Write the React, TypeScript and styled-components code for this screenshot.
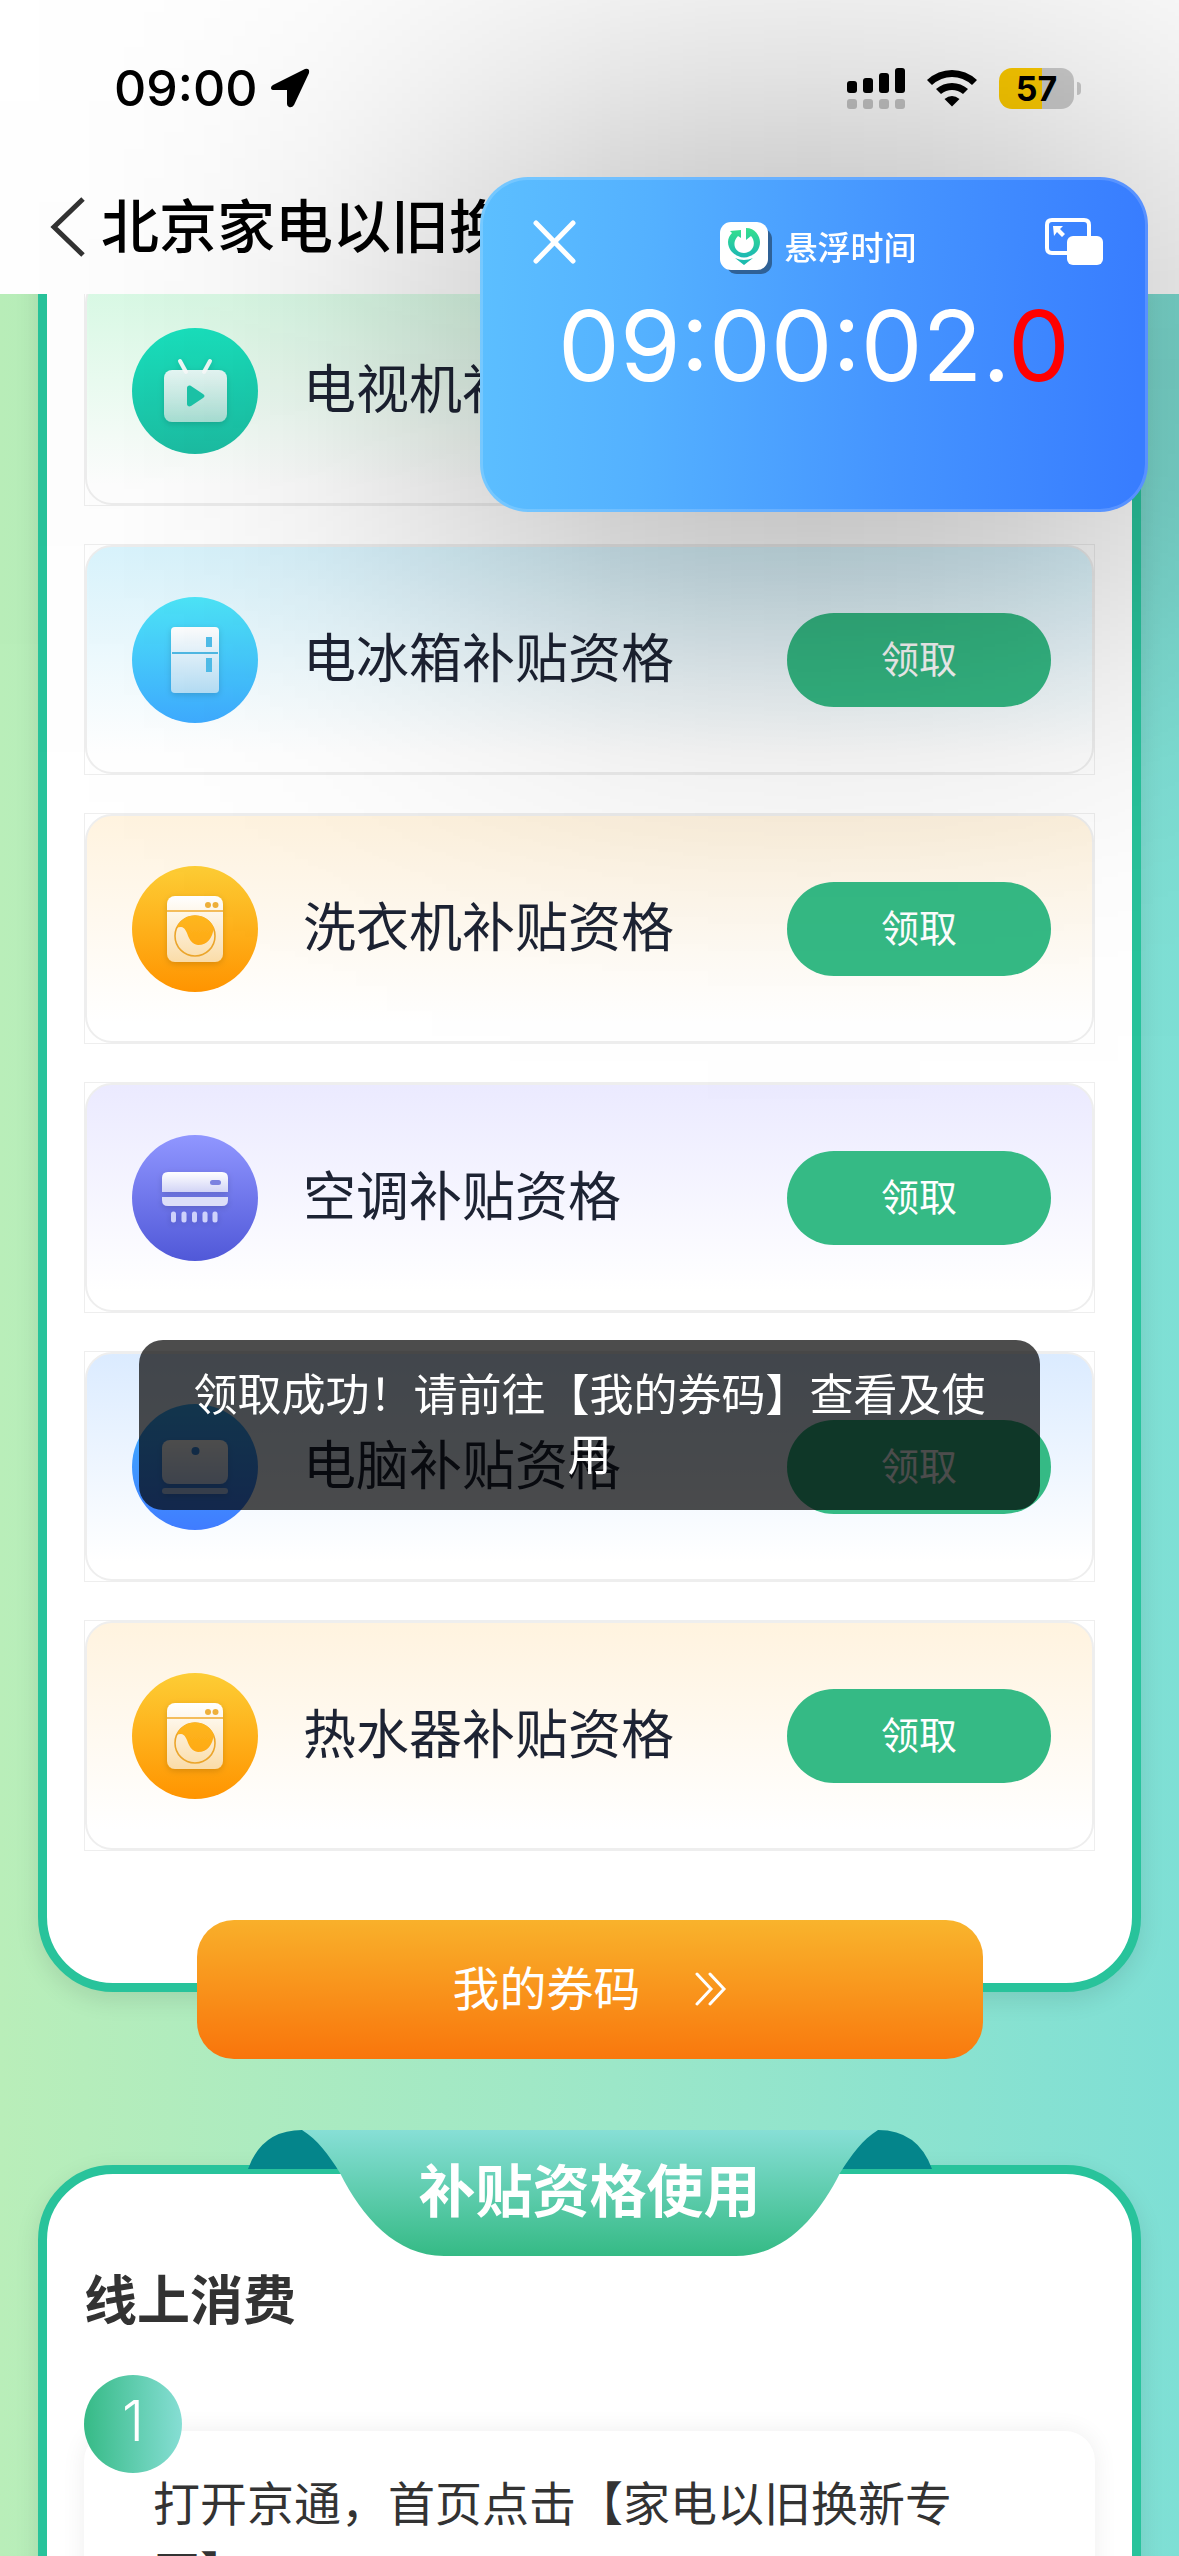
import React from "react";
import styled, { createGlobalStyle } from "styled-components";

const GlobalStyle = createGlobalStyle`
  *, *::before, *::after { box-sizing: border-box; }
  body {
    margin: 0;
    font-family: Inter, "Noto Sans CJK SC", sans-serif;
    color: #333;
  }
  h1, h2, h3, p, ul, ol { margin: 0; padding: 0; }
  ul, ol { list-style: none; }
  button { border: 0; padding: 0; background: none; color: inherit; font-family: inherit; cursor: pointer; }
  svg { display: block; flex: none; }
`;

const Screen = styled.div`
  display: flex;
  flex-direction: column;
  height: 100vh;
  overflow: hidden;
  background: linear-gradient(90deg, #b9eeb9 0%, #9ce7c8 52%, #7edfd5 100%);
`;

const Header = styled.header`
  flex: none;
  background: #fff;
  color: #000;
`;

const StatusBar = styled.div`
  display: flex;
  align-items: center;
  justify-content: space-between;
  height: 160px;
  padding: 16px 98px 0 114px;
`;

const StatusGroup = styled.div<{ $gap: number }>`
  display: flex;
  align-items: center;
  gap: ${(p) => p.$gap}px;
`;

const Clock = styled.time`
  font-size: 50px;
  line-height: 60px;
  font-weight: 500;
`;

const Battery = styled.div`
  display: flex;
  align-items: center;
  gap: 3px;
`;

const BatteryBody = styled.div`
  width: 75px;
  height: 41px;
  border-radius: 13px;
  background: linear-gradient(90deg, #ffcd00 57%, #cdcdcd 57%);
  font-size: 34px;
  line-height: 41px;
  font-weight: 700;
  text-align: center;
`;

const BatteryTip = styled.span`
  width: 4px;
  height: 13px;
  border-radius: 0 4px 4px 0;
  background: #cdcdcd;
`;

const NavBar = styled.div`
  display: flex;
  align-items: center;
  gap: 15px;
  height: 134px;
  padding: 0 48px;
`;

const BackButton = styled.button`
  width: 38px;
  height: 60px;
`;

const Title = styled.h1`
  overflow: hidden;
  white-space: nowrap;
  font-size: 58px;
  line-height: 80px;
  font-weight: 500;
`;

const Content = styled.main`
  flex: 1;
  min-height: 0;
  padding: 0 38px;
  overflow-y: auto;
  scrollbar-width: none;
`;

const Card = styled.section`
  border: 9px solid #28c39b;
  border-radius: 75px;
  background: #fff;
  box-shadow: 0 8px 24px rgba(0, 0, 0, 0.1);
`;

const ClaimCard = styled(Card)`
  margin-top: -120px;
  padding: 92px 37px 132px;
`;

const ClaimList = styled.ul`
  display: flex;
  flex-direction: column;
  gap: 38px;
`;

const ClaimItem = styled.li`
  height: 231px;
  border: 1px solid #eee;
`;

const ClaimPanel = styled.div<{ $tint: string }>`
  display: flex;
  align-items: center;
  height: 100%;
  padding: 0 41px 0 45px;
  border: 2px solid #eee;
  border-radius: 27px;
  background: linear-gradient(180deg, ${(p) => p.$tint} 0%, #fff 92%);
`;

const ClaimName = styled.span`
  flex: 1;
  padding: 0 0 2px 45px;
  font-size: 53px;
  line-height: 76px;
  color: #1d2333;
`;

const ClaimButton = styled.button`
  width: 264px;
  height: 94px;
  padding-bottom: 2px;
  border-radius: 47px;
  background: #35ba85;
  color: #fff;
  font-size: 38px;
  line-height: 56px;
`;

const VoucherButton = styled.button`
  position: relative;
  display: flex;
  align-items: center;
  justify-content: center;
  gap: 54px;
  width: calc(100% - 317px);
  height: 139px;
  margin: -72px auto 71px;
  padding-bottom: 2px;
  border-radius: 37px;
  background: linear-gradient(181deg, #f9b52d 0%, #f9740b 100%);
  color: #fff;
  font-size: 47px;
  line-height: 70px;
`;

const Ribbon = styled.h2`
  position: relative;
  z-index: 1;
  width: 684px;
  height: 126px;
  margin: 0 auto -91px;
  color: #fff;
  font-size: 57px;
  line-height: 124px;
  font-weight: 700;
  text-align: center;
`;

const RibbonShape = styled.svg`
  position: absolute;
  inset: 0;
  z-index: -1;
`;

const UsageCard = styled(Card)`
  padding: 97px 37px 80px;
`;

const UsageHeading = styled.h3`
  margin-bottom: 44px;
  font-size: 53px;
  line-height: 60px;
  font-weight: 700;
`;

const StepNumber = styled.span`
  position: relative;
  display: block;
  width: 98px;
  height: 98px;
  margin-bottom: -42px;
  border-radius: 50%;
  background: linear-gradient(90deg, #36ba86, #86ded4);
  color: #fff;
  font-size: 56px;
  line-height: 92px;
  font-weight: 300;
  text-align: center;
`;

const StepText = styled.p`
  padding: 38px 92px 60px 69px;
  border-radius: 30px;
  background: #fff;
  box-shadow: 0 0 24px rgba(0, 0, 0, 0.07);
  font-size: 47px;
  line-height: 70px;
`;

const Toast = styled.div`
  position: fixed;
  top: 1340px;
  left: 139px;
  right: 139px;
  padding: 25px 52px;
  border-radius: 24px;
  background: rgba(0, 0, 0, 0.7);
  color: #fff;
  font-size: 44px;
  line-height: 60px;
  text-align: center;
`;

/* Wide soft shade under the floating clock: a horizontal falloff masked by a vertical one. */
const FloatingShade = styled.div`
  position: fixed;
  top: -426px;
  right: -535px;
  width: 1800px;
  height: 1600px;
  pointer-events: none;
  background: linear-gradient(
    90deg,
    rgba(0, 0, 0, 0) 0px,
    rgba(0, 0, 0, 0.004) 100px,
    rgba(0, 0, 0, 0.012) 200px,
    rgba(0, 0, 0, 0.03) 300px,
    rgba(0, 0, 0, 0.062) 400px,
    rgba(0, 0, 0, 0.112) 500px,
    rgba(0, 0, 0, 0.168) 600px,
    rgba(0, 0, 0, 0.219) 700px,
    rgba(0, 0, 0, 0.252) 800px,
    rgba(0, 0, 0, 0.262) 900px,
    rgba(0, 0, 0, 0.252) 1000px,
    rgba(0, 0, 0, 0.219) 1100px,
    rgba(0, 0, 0, 0.168) 1200px,
    rgba(0, 0, 0, 0.112) 1300px,
    rgba(0, 0, 0, 0.062) 1400px,
    rgba(0, 0, 0, 0.03) 1500px,
    rgba(0, 0, 0, 0) 1800px
  );
  mask-image: linear-gradient(
    180deg,
    rgba(0, 0, 0, 0) 0px,
    rgba(0, 0, 0, 0.007) 100px,
    rgba(0, 0, 0, 0.028) 200px,
    rgba(0, 0, 0, 0.09) 300px,
    rgba(0, 0, 0, 0.22) 400px,
    rgba(0, 0, 0, 0.43) 500px,
    rgba(0, 0, 0, 0.69) 600px,
    rgba(0, 0, 0, 0.91) 700px,
    #000 800px,
    rgba(0, 0, 0, 0.91) 900px,
    rgba(0, 0, 0, 0.69) 1000px,
    rgba(0, 0, 0, 0.42) 1100px,
    rgba(0, 0, 0, 0.2) 1200px,
    rgba(0, 0, 0, 0.081) 1300px,
    rgba(0, 0, 0, 0.025) 1400px,
    rgba(0, 0, 0, 0.007) 1500px,
    rgba(0, 0, 0, 0) 1600px
  );
`;

const FloatingClock = styled.aside`
  position: fixed;
  top: 177px;
  right: 31px;
  width: 668px;
  height: 335px;
  padding-top: 38px;
  border: 3px solid rgba(255, 255, 255, 0.16);
  border-radius: 48px;
  background: linear-gradient(92deg, #5cbfff 0%, #54b1ff 25%, #4594ff 62%, #387dff 98%) border-box;
  color: #fff;
`;

const FloatingBar = styled.div`
  display: flex;
  align-items: center;
  justify-content: space-between;
  height: 48px;
  padding: 0 42px 0 50px;
`;

const BarButton = styled.button`
  width: 58px;
  height: 48px;
`;

const Brand = styled.div`
  display: flex;
  align-items: center;
  gap: 12px;
  padding-top: 12px;
  font-size: 33px;
  line-height: 48px;
  font-weight: 500;
`;

const FloatingTime = styled.time`
  display: block;
  margin-top: 20px;
  font-size: 98px;
  line-height: 120px;
  text-align: center;
`;

const Tenths = styled.span`
  color: #f00;
`;

type Kind = "tv" | "fridge" | "washer" | "ac" | "pc";

const discs: Record<Kind, [string, string]> = {
  tv: ["#19e3bf", "#1cbfa4"],
  fridge: ["#4de6f9", "#3eabff"],
  washer: ["#fdcd35", "#ff9400"],
  ac: ["#9096ff", "#5058d8"],
  pc: ["#3fb2ff", "#407cff"],
};

const faces: Record<Kind, string> = {
  tv: "#a9e2d6",
  fridge: "#b5def5",
  washer: "#fadca8",
  ac: "#d2d4f6",
  pc: "#cfe0ff",
};

const shapes: Record<Kind, (face: string, disc: string) => React.ReactNode> = {
  tv: (face) => (
    <>
      <path d="M48 33l6 11M78 33l-6 11" stroke="#effcf9" strokeWidth="4" strokeLinecap="round" />
      <rect x="32" y="42" width="63" height="52" rx="8" fill={face} />
      <path d="M55 60c0-2 2-3 4-2l12 8c2 1 2 3 0 4l-12 8c-2 1-4 0-4-2z" fill="#1cc7aa" />
    </>
  ),
  fridge: (face) => (
    <>
      <rect x="39" y="30" width="48" height="66" rx="4" fill={face} />
      <path d="M40 56h46" stroke="#4fb9e4" strokeWidth="2" />
      <path d="M77 40v10M77 61v14" stroke="#4fbdea" strokeWidth="6" />
    </>
  ),
  washer: (face, disc) => (
    <>
      <rect x="35" y="30" width="56" height="66" rx="8" fill={face} />
      <path d="M35 45h56" stroke="#f0aa2b" strokeWidth="1.5" />
      <circle cx="76" cy="39" r="3" fill="#eeb03a" />
      <circle cx="83.500" cy="39" r="3" fill="#eeb03a" />
      <circle cx="63" cy="70" r="20" stroke="#eba52c" strokeWidth="1.600" />
      <path d="M45 62C50 46 75 45 82 62C80 72 76 79 66 79C54 77 57 62 49 61Q46 61 45 62z" fill={disc} />
    </>
  ),
  ac: (face) => (
    <>
      <path d="M30 57V43q0-6 6-6h54q6 0 6 6v14z" fill={face} />
      <path d="M30 62h66v3q0 6-6 6H36q-6 0-6-6z" fill="#dcdef8" />
      <rect x="78" y="45" width="11" height="5" rx="2.500" fill="#7c82e0" />
      <path d="M41.500 79v6M52 79v6M62.500 79v6M73 79v6M83 79v6" stroke="#cfd2fb" strokeWidth="5" strokeLinecap="round" />
    </>
  ),
  pc: (face) => (
    <>
      <rect x="30" y="36" width="66" height="44" rx="8" fill={face} />
      <rect x="30" y="84" width="66" height="6" rx="3" fill="#b5d0fb" />
      <circle cx="63.500" cy="47" r="4" fill="#3a8ce8" />
    </>
  ),
};

function ApplianceIcon({ kind }: { kind: Kind }) {
  const id = React.useId().replace(/[^a-zA-Z0-9]/g, "");
  const [top, bottom] = discs[kind];
  return (
    <svg width="126" height="126" viewBox="0 0 126 126" fill="none" aria-hidden="true">
      <defs>
        <linearGradient id={`${id}d`} x1="0" y1="0" x2="0" y2="126" gradientUnits="userSpaceOnUse">
          <stop stopColor={top} />
          <stop offset="1" stopColor={bottom} />
        </linearGradient>
        <linearGradient id={`${id}f`} x1="0" y1="0" x2="0" y2="1">
          <stop stopColor="#fff" stopOpacity={kind === "tv" ? 0.9 : 1} />
          <stop offset="1" stopColor={faces[kind]} />
        </linearGradient>
        <filter id={`${id}s`} x="-30%" y="-30%" width="160%" height="160%">
          <feDropShadow dx="0" dy="2" stdDeviation="3" floodColor="#000" floodOpacity="0.15" />
        </filter>
      </defs>
      <circle cx="63" cy="63" r="63" fill={`url(#${id}d)`} />
      <g filter={`url(#${id}s)`}>{shapes[kind](`url(#${id}f)`, `url(#${id}d)`)}</g>
    </svg>
  );
}

const claims: { name: string; kind: Kind; tint: string }[] = [
  { name: "电视机补贴资格", kind: "tv", tint: "#d8fbe5" },
  { name: "电冰箱补贴资格", kind: "fridge", tint: "#d9f4fd" },
  { name: "洗衣机补贴资格", kind: "washer", tint: "#fff3df" },
  { name: "空调补贴资格", kind: "ac", tint: "#ebeaff" },
  { name: "电脑补贴资格", kind: "pc", tint: "#dbebff" },
  { name: "热水器补贴资格", kind: "washer", tint: "#fff3df" },
];

const LocationArrow = () => (
  <svg width="40" height="40" viewBox="0 0 40 40" aria-label="定位">
    <path d="M3 17 35 1q5-1 4 4L24 37q-2 3-5 2-2-1-2-3V22H4q-3 0-3-2 0-2 2-3z" />
  </svg>
);

const Signal = () => (
  <svg width="58" height="41" viewBox="0 0 58 41" aria-label="信号">
    {[13, 10, 5, 0].map((y, i) => (
      <React.Fragment key={y}>
        <rect x={i * 16} y={y} width="10" height={25 - y} rx="3" />
        <rect x={i * 16} y="31" width="10" height="10" rx="3" fill="#c6c6c6" />
      </React.Fragment>
    ))}
  </svg>
);

const Wifi = () => (
  <svg width="52" height="38" viewBox="0 0 52 38" aria-label="无线网络">
    <path d="M1 11Q12 1 26 1t25 10l-5 5Q37 8 26 8T6 16z" />
    <path d="M10 20q7-6 16-6t16 6l-5 5q-5-4-11-4t-11 4z" />
    <path d="M18.500 30q7.500-6 15 0L26 37.500z" />
  </svg>
);

const BrandLogo = () => (
  <svg width="53" height="53" viewBox="0 0 53 53" aria-hidden="true">
    <defs>
      <linearGradient id="brand" x1="0" y1="0" x2="0" y2="1">
        <stop stopColor="#35e08c" />
        <stop offset="1" stopColor="#1cb8b4" />
      </linearGradient>
    </defs>
    <rect x="6" y="6" width="46" height="46" rx="11" fill="#2f6196" />
    <rect x="0" y="0" width="48" height="48" rx="11" fill="#fff" />
    <path
      d="M10 9l11-1v8l-3-2c-7 7-3 17 6 17s13-10 7-17l-5 4V6c9 0 14 8 14 14 0 7-4 12-10 14-4 2-8 2-12 0-5-2-10-7-10-14 0-4 2-7 4-9z"
      fill="url(#brand)"
    />
    <path d="M15 36q9 4 18 0l-9 7z" fill="#1cbcae" />
  </svg>
);

export default function App() {
  return (
    <>
      <GlobalStyle />
      <Screen>
        <Header>
          <StatusBar>
            <StatusGroup $gap={13}>
              <Clock>09:00</Clock>
              <LocationArrow />
            </StatusGroup>
            <StatusGroup $gap={21}>
              <Signal />
              <Wifi />
              <Battery>
                <BatteryBody>57</BatteryBody>
                <BatteryTip />
              </Battery>
            </StatusGroup>
          </StatusBar>
          <NavBar>
            <BackButton aria-label="返回">
              <svg width="38" height="60" viewBox="0 0 38 60" fill="none">
                <path d="M35 2 6 30l29 28" stroke="#333" strokeWidth="5" />
              </svg>
            </BackButton>
            <Title>北京家电以旧换新</Title>
          </NavBar>
        </Header>

        <Content>
          <ClaimCard>
            <ClaimList>
              {claims.map((c) => (
                <ClaimItem key={c.name}>
                  <ClaimPanel $tint={c.tint}>
                    <ApplianceIcon kind={c.kind} />
                    <ClaimName>{c.name}</ClaimName>
                    <ClaimButton>领取</ClaimButton>
                  </ClaimPanel>
                </ClaimItem>
              ))}
            </ClaimList>
          </ClaimCard>
          <VoucherButton>
            我的券码
            <svg width="32" height="34" viewBox="0 0 32 34" fill="none" aria-hidden="true">
              <path d="m2 2 14 15L2 32M15 2l14 15-14 15" stroke="#fff" strokeWidth="3" strokeLinecap="round" />
            </svg>
          </VoucherButton>

          <Ribbon>
            <RibbonShape width="684" height="126" viewBox="0 0 684 126" aria-hidden="true">
              <defs>
                <linearGradient id="ribbon" x1="0" y1="0" x2="0" y2="1">
                  <stop stopColor="#87dfd6" />
                  <stop offset="1" stopColor="#35ba85" />
                </linearGradient>
              </defs>
              <path d="M0 39Q14 0 54 0h20l20 39zM684 39Q670 0 630 0h-20l-20 39z" fill="#04858b" />
              <path d="M54 0h576c-16 10-26 24-38 43-22 44-56 83-104 83H196C148 126 114 87 92 43 80 24 70 10 54 0z" fill="url(#ribbon)" />
            </RibbonShape>
            补贴资格使用
          </Ribbon>
          <UsageCard>
            <UsageHeading>线上消费</UsageHeading>
            <ol>
              <li>
                <StepNumber>1</StepNumber>
                <StepText>打开京通，首页点击【家电以旧换新专区】</StepText>
              </li>
            </ol>
          </UsageCard>
        </Content>
      </Screen>

      <Toast role="status">领取成功！请前往【我的券码】查看及使用</Toast>

      <FloatingShade />
      <FloatingClock>
        <FloatingBar>
          <BarButton aria-label="关闭">
            <svg width="44" height="44" viewBox="0 0 44 44" fill="none">
              <path d="m3 3 37 38M40 3 3 41" stroke="#fff" strokeWidth="5" strokeLinecap="round" />
            </svg>
          </BarButton>
          <Brand>
            <BrandLogo />
            悬浮时间
          </Brand>
          <BarButton aria-label="还原窗口">
            <svg width="58" height="48" viewBox="0 0 58 48" fill="none">
              <path d="M22 35H7q-5 0-5-5V7q0-5 5-5h32q5 0 5 5v12" stroke="#fff" strokeWidth="4" />
              <rect x="22" y="18" width="36" height="29" rx="6" fill="#fff" />
              <path d="M8 8h10l-3 3 5 5-3 3-5-5-3 4z" fill="#fff" />
            </svg>
          </BarButton>
        </FloatingBar>
        <FloatingTime>
          09:00:02.<Tenths>0</Tenths>
        </FloatingTime>
      </FloatingClock>
    </>
  );
}
